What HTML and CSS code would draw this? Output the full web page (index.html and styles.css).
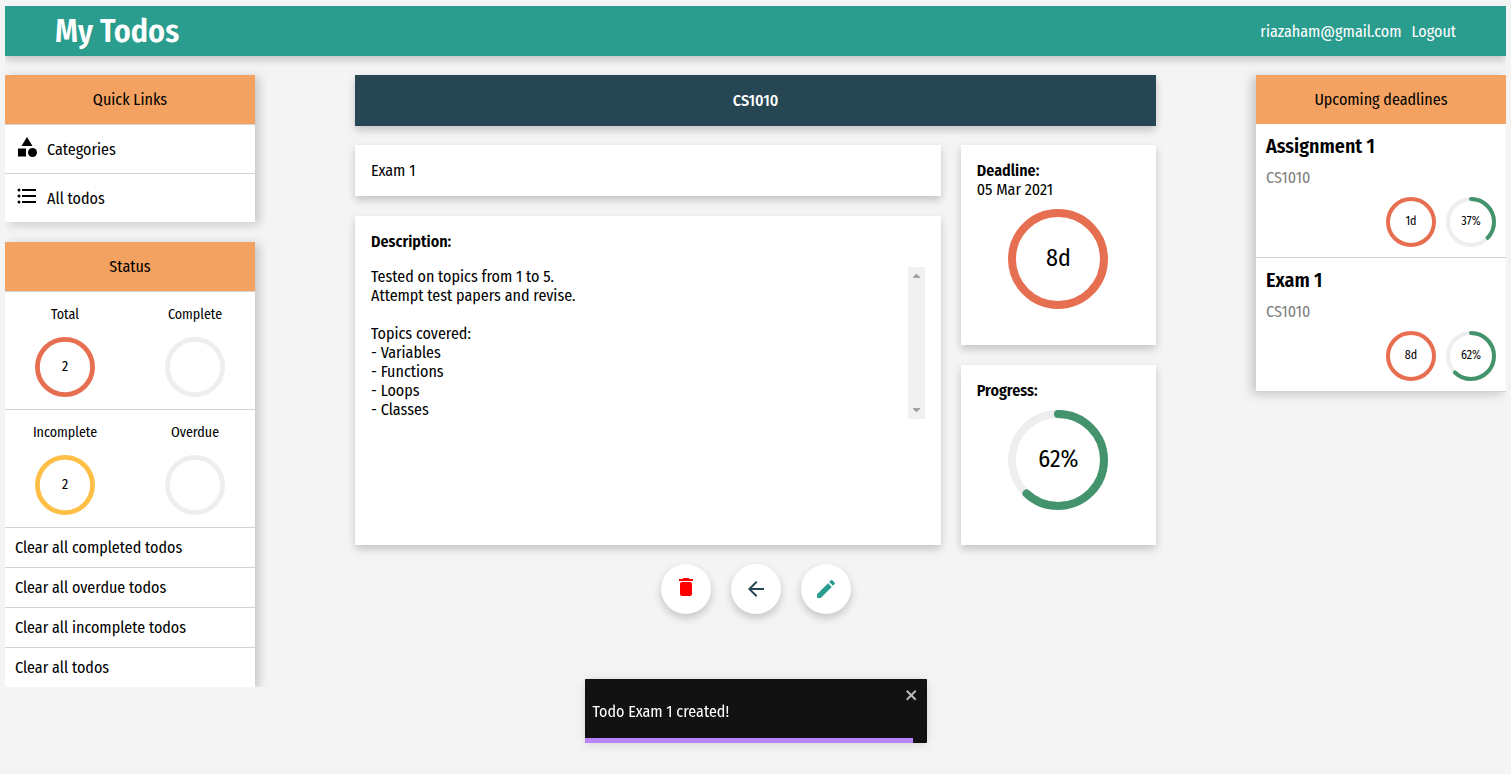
FILE: index.html
```html
<!DOCTYPE html>
<html lang="en">
<head>
<meta charset="utf-8">
<meta name="viewport" content="width=device-width, initial-scale=1">
<title>My Todos</title>
<link rel="stylesheet" href="styles.css">
</head>
<body>
<header class="topbar">
  <h1 class="brand">My Todos</h1>
  <nav class="account"><span>riazaham@gmail.com</span><a href="#logout">Logout</a></nav>
</header>

<div class="layout">
  <aside class="side side-left">
    <section class="panel">
      <h2 class="panel-title">Quick Links</h2>
      <a class="quick-link" href="#categories">
        <svg class="icon" viewBox="0 0 24 24"><path d="M12 2l-5.500 9h11z"/><circle cx="17.500" cy="17.500" r="4.500"/><path d="M3 13.500h8v8H3z"/></svg>
        <span>Categories</span>
      </a>
      <a class="quick-link" href="#todos">
        <svg class="icon" viewBox="0 0 24 24"><circle cx="4" cy="6" r="1.500"/><circle cx="4" cy="12" r="1.500"/><circle cx="4" cy="18" r="1.500"/><path d="M7 5h14v2H7zM7 11h14v2H7zM7 17h14v2H7z"/></svg>
        <span>All todos</span>
      </a>
    </section>

    <section class="panel">
      <h2 class="panel-title">Status</h2>
      <div class="status-row">
        <div class="status">
          <span>Total</span>
          <div class="ring ring-medium"><svg viewBox="0 0 100 100"><circle class="value red" cx="50" cy="50" r="46"/></svg><span>2</span></div>
        </div>
        <div class="status">
          <span>Complete</span>
          <div class="ring ring-medium"><svg viewBox="0 0 100 100"><circle class="track" cx="50" cy="50" r="46"/></svg></div>
        </div>
      </div>
      <div class="status-row">
        <div class="status">
          <span>Incomplete</span>
          <div class="ring ring-medium"><svg viewBox="0 0 100 100"><circle class="value yellow" cx="50" cy="50" r="46"/></svg><span>2</span></div>
        </div>
        <div class="status">
          <span>Overdue</span>
          <div class="ring ring-medium"><svg viewBox="0 0 100 100"><circle class="track" cx="50" cy="50" r="46"/></svg></div>
        </div>
      </div>
      <button class="clear" type="button">Clear all completed todos</button>
      <button class="clear" type="button">Clear all overdue todos</button>
      <button class="clear" type="button">Clear all incomplete todos</button>
      <button class="clear" type="button">Clear all todos</button>
    </section>
  </aside>

  <main class="main">
    <h2 class="category">CS1010</h2>
    <div class="details">
      <div class="column">
        <section class="card">Exam 1</section>
        <section class="card card-grow">
          <label class="label" for="description">Description:</label>
          <div class="notes">
            <textarea id="description" rows="8" readonly>Tested on topics from 1 to 5.
Attempt test papers and revise.

Topics covered:
- Variables
- Functions
- Loops
- Classes</textarea>
            <div class="scroll" aria-hidden="true">
              <svg viewBox="0 0 17 17"><path d="M5 11h7v-1L9 7H8l-3 3z"/></svg>
              <svg viewBox="0 0 17 17"><path d="M5 6h7v1l-3 3H8L5 7z"/></svg>
            </div>
          </div>
        </section>
      </div>
      <div class="column">
        <section class="card card-deadline">
          <strong class="label">Deadline:</strong>
          <span>05 Mar 2021</span>
          <div class="ring ring-large"><svg viewBox="0 0 100 100"><circle class="value red" cx="50" cy="50" r="46"/></svg><span>8d</span></div>
        </section>
        <section class="card card-progress">
          <strong class="label">Progress:</strong>
          <div class="ring ring-large"><svg viewBox="0 0 100 100"><circle class="track" cx="50" cy="50" r="46"/><circle class="value green" cx="50" cy="50" r="46" pathLength="100" stroke-dasharray="62 100"/></svg><span>62%</span></div>
        </section>
      </div>
    </div>
    <div class="actions">
      <button class="round delete" type="button" aria-label="Delete"><svg class="icon" viewBox="0 0 24 24"><path d="M6 17c0 1.100.9 2 2 2h8c1.100 0 2-.9 2-2V7c0-1.100-.9-2-2-2H8c-1.100 0-2 .9-2 2v10zM19 2h-3.500l-.71-.71c-.18-.18-.44-.29-.7-.29H9.910c-.26 0-.52.110-.7.290L8.500 2H5v2h14V2z"/></svg></button>
      <button class="round back" type="button" aria-label="Back"><svg class="icon" viewBox="0 0 24 24"><path d="M20 11H7.830l5.590-5.590L12 4l-8 8 8 8 1.410-1.410L7.830 13H20v-2z"/></svg></button>
      <button class="round edit" type="button" aria-label="Edit"><svg class="icon" viewBox="0 0 24 24"><path d="M3 17.250V21h3.750L17.810 9.940l-3.750-3.750L3 17.250zM20.710 7.040c.39-.39.39-1.020 0-1.410l-2.340-2.340c-.39-.39-1.020-.39-1.410 0l-1.830 1.830 3.750 3.750 1.830-1.830z"/></svg></button>
    </div>
  </main>

  <aside class="side side-right">
    <section class="panel">
      <h2 class="panel-title">Upcoming deadlines</h2>
      <article class="deadline">
        <h3>Assignment 1</h3>
        <span class="course">CS1010</span>
        <div class="rings">
          <div class="ring ring-small"><svg viewBox="0 0 100 100"><circle class="value red" cx="50" cy="50" r="46"/></svg><span>1d</span></div>
          <div class="ring ring-small"><svg viewBox="0 0 100 100"><circle class="track" cx="50" cy="50" r="46"/><circle class="value green" cx="50" cy="50" r="46" pathLength="100" stroke-dasharray="37 100"/></svg><span>37%</span></div>
        </div>
      </article>
      <article class="deadline">
        <h3>Exam 1</h3>
        <span class="course">CS1010</span>
        <div class="rings">
          <div class="ring ring-small"><svg viewBox="0 0 100 100"><circle class="value red" cx="50" cy="50" r="46"/></svg><span>8d</span></div>
          <div class="ring ring-small"><svg viewBox="0 0 100 100"><circle class="track" cx="50" cy="50" r="46"/><circle class="value green" cx="50" cy="50" r="46" pathLength="100" stroke-dasharray="62 100"/></svg><span>62%</span></div>
        </div>
      </article>
    </section>
  </aside>
</div>

<div class="toast" role="alert">
  <span class="toast-text">Todo Exam 1 created!</span>
  <button class="toast-close" type="button" aria-label="Close"><svg viewBox="0 0 14 16"><path d="M7.710 8.230l3.750 3.750-1.480 1.480-3.750-3.750-3.750 3.750L1 11.980l3.750-3.750L1 4.480 2.480 3l3.750 3.750L9.980 3l1.480 1.480-3.750 3.750z"/></svg></button>
  <div class="toast-progress" style="width: 96%"></div>
</div>
</body>
</html>
```
FILE: styles.css
```css
* { box-sizing: border-box; }

body {
  margin: 6px 5px;
  background: #f4f4f4;
  color: #000;
  font: 400 16px/19px "Fira Sans Condensed", Lato, sans-serif;
}

h1, h2, h3 { margin: 0; font-weight: 400; }
a { color: inherit; text-decoration: none; }
button, textarea { font: inherit; color: inherit; border: 0; background: none; cursor: pointer; }

.icon { display: block; width: 24px; height: 24px; fill: currentColor; }

.topbar {
  display: flex;
  align-items: center;
  justify-content: space-between;
  height: 50px;
  padding: 0 50px;
  background: #2a9d8f;
  color: #fff;
  box-shadow: 0 4px 8px rgba(0, 0, 0, .2);
}
.brand { font-size: 32px; line-height: 38px; font-weight: 600; }
.account { display: flex; gap: 10px; }

.layout { display: flex; align-items: flex-start; margin-top: 19px; }
.side { flex: 0 0 250px; display: grid; gap: 20px; }
.panel { background: #fff; }
.side-left .panel { box-shadow: 4px 2px 10px rgba(0, 0, 0, .2); }
.side-right .panel { box-shadow: -4px 2px 10px rgba(0, 0, 0, .2); }
.panel-title {
  padding: 15px 10px;
  background: #f4a261;
  font-size: 16px;
  line-height: 19px;
  text-align: center;
}

.quick-link {
  display: flex;
  gap: 8px;
  padding: 10px 10px 8px;
  border-top: 1px solid #d3d3d3;
  line-height: 30px;
}

.status-row {
  display: grid;
  grid-template-columns: 1fr 1fr;
  gap: 10px;
  padding: 12px 0;
  border-top: 1px solid #d3d3d3;
}
.status { display: grid; justify-items: center; gap: 12px; font-size: 14px; line-height: 21px; }
.clear {
  display: block;
  width: 100%;
  padding: 10px;
  border-top: 1px solid #d3d3d3;
  text-align: left;
}

.ring { display: grid; place-items: center; }
.ring > * { grid-area: 1 / 1; }
.ring svg { width: 100%; height: 100%; transform: rotate(-90deg); }
.ring circle { fill: none; stroke-width: 8; stroke-linecap: round; }
.ring .track { stroke: #eee; }
.ring .red { stroke: #e76f51; }
.ring .yellow { stroke: #ffbf47; }
.ring .green { stroke: #43936c; }
.ring > span { padding-bottom: 2px; }
.ring-small { width: 50px; height: 50px; font-size: 12px; }
.ring-medium { width: 60px; height: 60px; }
.ring-large { width: 100px; height: 100px; margin: 10px auto 0; font-size: 24px; }

.main { flex: 1; min-width: 0; padding: 0 100px; }
.category {
  padding: 16px;
  background: #264653;
  color: #fff;
  font-size: 16px;
  line-height: 19px;
  font-weight: 500;
  text-align: center;
  box-shadow: 0 4px 8px rgba(0, 0, 0, .2);
}
.details { display: grid; grid-template-columns: 3fr 1fr; gap: 20px; margin-top: 19px; }
.column { display: flex; flex-direction: column; gap: 20px; min-width: 0; }
.card {
  display: flex;
  flex-direction: column;
  padding: 16px;
  background: #fff;
  box-shadow: 0 4px 8px rgba(0, 0, 0, .2);
}
.card-grow { flex: 1; }
.card-deadline { min-height: 200px; }
.card-progress { min-height: 180px; }
.label { font-weight: 600; }
.notes { display: flex; margin-top: 16px; }
.notes textarea { flex: 1; min-width: 0; padding: 0; resize: none; overflow: hidden; outline: 0; }
.scroll {
  display: flex;
  flex-direction: column;
  justify-content: space-between;
  width: 17px;
  background: #f1f1f1;
  fill: #a3a3a3;
}
.scroll svg { display: block; width: 17px; height: 17px; }

.actions { display: flex; justify-content: center; gap: 20px; margin-top: 19px; }
.round {
  display: grid;
  place-items: center;
  width: 50px;
  height: 50px;
  padding: 0;
  border-radius: 50%;
  background: #fff;
  box-shadow: 0 4px 8px rgba(0, 0, 0, .2);
}
.delete { color: #f00; }
.back { color: #264653; }
.edit { color: #2a9d8f; }

.deadline {
  display: grid;
  gap: 10px;
  padding: 10px;
  border-bottom: 1px solid #d3d3d3;
}
.deadline h3 { font-size: 20px; line-height: 24px; font-weight: 600; }
.course { color: #808080; }
.rings { display: flex; justify-content: flex-end; gap: 10px; }

.toast {
  position: fixed;
  left: 50%;
  bottom: 31px;
  display: flex;
  align-items: center;
  justify-content: space-between;
  width: 342px;
  height: 64px;
  padding: 8px;
  transform: translateX(-50%);
  border-radius: 1px;
  overflow: hidden;
  background: #121212;
  color: #fff;
  box-shadow: 0 1px 10px rgba(0, 0, 0, .1), 0 2px 15px rgba(0, 0, 0, .05);
}
.toast-close { align-self: flex-start; padding: 0; opacity: .7; }
.toast-close svg { display: block; width: 14px; height: 16px; fill: #fff; }
.toast-progress { position: absolute; left: 0; bottom: 0; height: 5px; background: #bb86fc; }
```
